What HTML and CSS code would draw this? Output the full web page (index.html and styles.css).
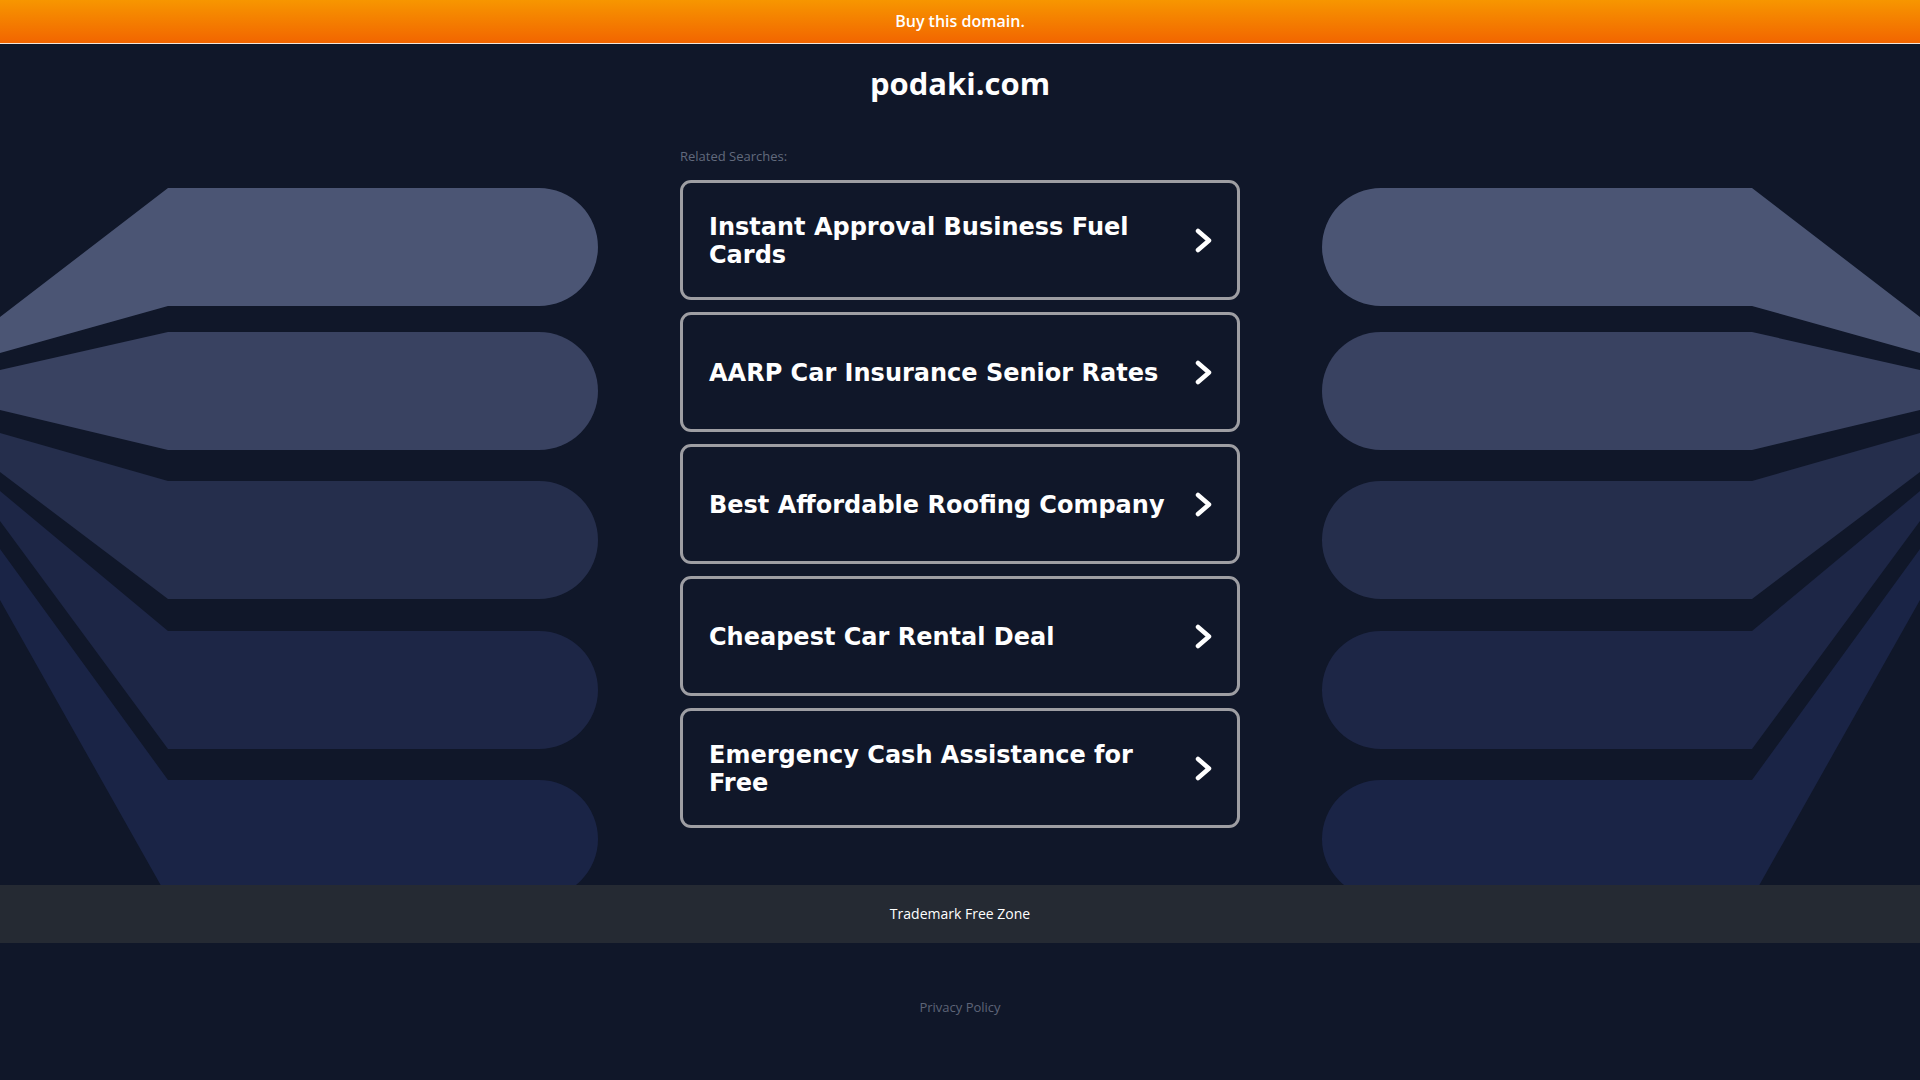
FILE: index.html
```html
<!DOCTYPE html>
<html>
<head lang="en">
    <meta charset="UTF-8">
    <title>podaki.com</title>
    <link rel="stylesheet" href="styles.css">
</head>
<body>
<div class="topbar"><a href="#">Buy this domain.</a></div>
<div class="main">
    <div class="art art-left">
        <svg viewBox="0 188 598 697" width="598" height="697">
            <path fill="#4b5574" d="M0 317 L168 188 L539 188 A59 59 0 0 1 539 306 L168 306 L0 353 Z"/>
            <path fill="#394261" d="M0 370 L168 332 L539 332 A59 59 0 0 1 539 450 L168 450 L0 410 Z"/>
            <path fill="#252e4c" d="M0 433 L168 481 L539 481 A59 59 0 0 1 539 599 L168 599 L0 472 Z"/>
            <path fill="#1d2646" d="M0 491 L168 631 L539 631 A59 59 0 0 1 539 749 L168 749 L0 521 Z"/>
            <path fill="#1a2446" d="M0 549 L168 780 L539 780 A59 59 0 0 1 539 898 L168 898 L0 600 Z"/>
        </svg>
    </div>
    <div class="content">
        <h1>podaki.com</h1>
        <div class="related">Related Searches:</div>
        <ul class="links">
            <li><a href="#"><span>Instant Approval Business Fuel Cards</span><svg class="chev" viewBox="0 0 17 25"><path d="M3 3 L14 12.5 L3 22"/></svg></a></li>
            <li><a href="#"><span>AARP Car Insurance Senior Rates</span><svg class="chev" viewBox="0 0 17 25"><path d="M3 3 L14 12.5 L3 22"/></svg></a></li>
            <li><a href="#"><span>Best Affordable Roofing Company</span><svg class="chev" viewBox="0 0 17 25"><path d="M3 3 L14 12.5 L3 22"/></svg></a></li>
            <li><a href="#"><span>Cheapest Car Rental Deal</span><svg class="chev" viewBox="0 0 17 25"><path d="M3 3 L14 12.5 L3 22"/></svg></a></li>
            <li><a href="#"><span>Emergency Cash Assistance for Free</span><svg class="chev" viewBox="0 0 17 25"><path d="M3 3 L14 12.5 L3 22"/></svg></a></li>
        </ul>
    </div>
    <div class="art art-right">
        <svg viewBox="0 188 598 697" width="598" height="697">
            <path fill="#4b5574" d="M0 317 L168 188 L539 188 A59 59 0 0 1 539 306 L168 306 L0 353 Z"/>
            <path fill="#394261" d="M0 370 L168 332 L539 332 A59 59 0 0 1 539 450 L168 450 L0 410 Z"/>
            <path fill="#252e4c" d="M0 433 L168 481 L539 481 A59 59 0 0 1 539 599 L168 599 L0 472 Z"/>
            <path fill="#1d2646" d="M0 491 L168 631 L539 631 A59 59 0 0 1 539 749 L168 749 L0 521 Z"/>
            <path fill="#1a2446" d="M0 549 L168 780 L539 780 A59 59 0 0 1 539 898 L168 898 L0 600 Z"/>
        </svg>
    </div>
</div>
<div class="footer">Trademark Free Zone</div>
<div class="privacy"><a href="#">Privacy Policy</a></div>
</body>
</html>
```

FILE: styles.css
```css
*{padding:0;margin:0;box-sizing:border-box;}
body{background:#101729;color:#fff;font-family:"Open Sans","Noto Sans",sans-serif;}
a{color:inherit;text-decoration:none;}

.topbar{height:44px;line-height:43px;text-align:center;font-size:16px;font-weight:600;
    background:linear-gradient(#f79600,#f26500);border-bottom:1px solid #f3e6da;}

.main{display:grid;grid-template-columns:1fr 560px 1fr;column-gap:82px;height:841px;overflow:hidden;}
.art{padding-top:144px;}
.art svg{display:block;}
.art-right{display:flex;justify-content:flex-end;}
.art-right svg{transform:scale(-1,1);}

.content{padding-top:19px;}
.content h1{font-size:31px;line-height:40px;font-weight:700;text-align:center;}
.related{margin-top:45px;font-size:13px;line-height:16px;color:#626a7d;}
.links{list-style:none;margin-top:16px;}
.links li{margin-bottom:12px;}
.links li a{display:flex;align-items:center;height:120px;border:3px solid #9e9ea3;border-radius:11px;
    padding:1px 25px 0 26px;column-gap:14px;
    font-family:"DejaVu Sans",sans-serif;font-weight:700;font-size:24px;line-height:28px;}
.links li a span{flex:1;}
.chev{width:17px;height:25px;flex:none;}
.chev path{fill:none;stroke:#fff;stroke-width:4.5;stroke-linecap:round;stroke-linejoin:round;}

.footer{height:58px;line-height:58px;background:#252a33;text-align:center;font-size:14px;}
.privacy{margin-top:55px;text-align:center;font-size:13px;line-height:18px;color:#5e6477;}
```
